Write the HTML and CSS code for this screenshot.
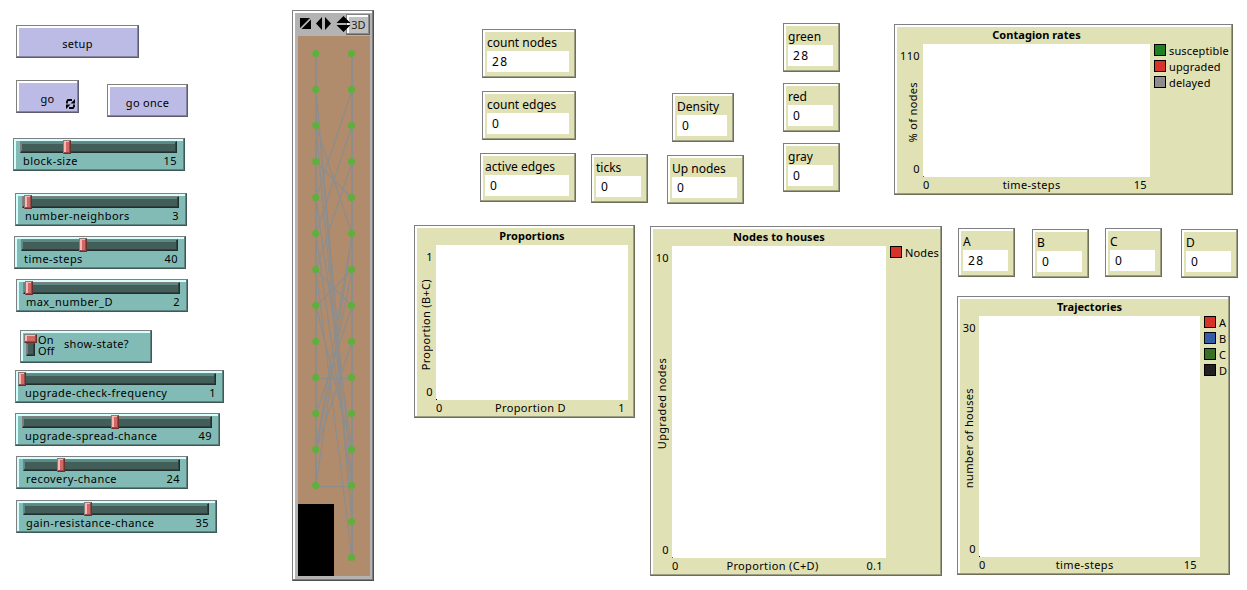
FILE: index.html
```
<!DOCTYPE html>
<html lang="en">
<head>
<meta charset="utf-8">
<title>Contagion model</title>
<link rel="stylesheet" href="styles.css">
</head>
<body>
<main class="canvas">
  <button class="widget button at-setup">setup</button>
  <button class="widget button at-go">go
    <svg class="forever" width="9" height="10" viewBox="0 0 9 10"><path d="M1 4.500V2.500L2 1H6M8 5.500V7.500L7 9H3" fill="none" stroke="#000" stroke-width="1.800"/><path d="M9 0V4.500H4.500zM0 10V5.500H4.500z"/></svg>
  </button>
  <button class="widget button at-once">go once</button>

  <div class="widget slider at-block"><div class="track"></div><i class="thumb"></i><div class="caption"><span>block-size</span><span>15</span></div></div>
  <div class="widget slider at-neighbors"><div class="track"></div><i class="thumb"></i><div class="caption"><span>number-neighbors</span><span>3</span></div></div>
  <div class="widget slider at-steps"><div class="track"></div><i class="thumb"></i><div class="caption"><span>time-steps</span><span>40</span></div></div>
  <div class="widget slider at-max"><div class="track"></div><i class="thumb"></i><div class="caption"><span>max_number_D</span><span>2</span></div></div>
  <div class="widget slider switch at-state">
    <div class="lever"><i class="knob"></i><i class="slot"></i></div>
    <div class="states"><span>On</span><span>Off</span></div>
    <span class="switch-name">show-state?</span>
  </div>
  <div class="widget slider at-check"><div class="track"></div><i class="thumb"></i><div class="caption"><span>upgrade-check-frequency</span><span>1</span></div></div>
  <div class="widget slider at-spread"><div class="track"></div><i class="thumb"></i><div class="caption"><span>upgrade-spread-chance</span><span>49</span></div></div>
  <div class="widget slider at-recovery"><div class="track"></div><i class="thumb"></i><div class="caption"><span>recovery-chance</span><span>24</span></div></div>
  <div class="widget slider at-gain"><div class="track"></div><i class="thumb"></i><div class="caption"><span>gain-resistance-chance</span><span>35</span></div></div>

  <section class="widget view">
    <div class="toolbar">
      <svg width="52" height="16" viewBox="0 0 52 16"><path d="M1 2H11L1 12zM12 3.500V13H2.500z"/><path d="M17 7.500L23 1V14zM32 7.500L26 1V14z"/><path d="M37.500 7L44.500 0L51.500 7zM37.500 9H51.500L44.500 16z"/></svg>
      <button class="widget three-d">3D</button>
    </div>
    <svg class="world" width="72" height="540" viewBox="0 0 72 540">
      <rect width="72" height="540" fill="#b08c6c"/>
      <rect y="468" width="36" height="72"/>
      <g stroke="#8d8d8d" fill="none">
        <path stroke-width="2" d="M18 18V450M54 18V522"/>
        <path stroke-width="1.200" d="M18 54L54 486M18 54L54 450M18 90L54 198M18 90L54 486M18 126L54 162M18 162L54 414M18 198L54 450M18 234L54 522M18 234L54 270M18 270L54 414M18 342.500H54M18 450.500H54M54 54L18 162M54 90L18 198M54 126L18 234M54 198L18 414M54 198L18 450M54 234L18 270M54 234L18 414M54 270L18 378M54 306L18 414"/>
      </g>
      <path stroke="#5cb03c" stroke-width="7" stroke-linecap="round" stroke-dasharray="0 36" d="M17.700 17.500V450"/>
      <path stroke="#5cb03c" stroke-width="7" stroke-linecap="round" stroke-dasharray="0 36" d="M53.500 17.500V522"/>
    </svg>
  </section>

  <div class="widget monitor at-nodes"><span>count nodes</span><output>28</output></div>
  <div class="widget monitor at-edges"><span>count edges</span><output>0</output></div>
  <div class="widget monitor at-active"><span>active edges</span><output>0</output></div>
  <div class="widget monitor at-ticks"><span>ticks</span><output>0</output></div>
  <div class="widget monitor at-density"><span>Density</span><output>0</output></div>
  <div class="widget monitor at-up"><span>Up nodes</span><output>0</output></div>
  <div class="widget monitor at-green"><span>green</span><output>28</output></div>
  <div class="widget monitor at-red"><span>red</span><output>0</output></div>
  <div class="widget monitor at-gray"><span>gray</span><output>0</output></div>
  <div class="widget monitor at-a"><span>A</span><output>28</output></div>
  <div class="widget monitor at-b"><span>B</span><output>0</output></div>
  <div class="widget monitor at-c"><span>C</span><output>0</output></div>
  <div class="widget monitor at-d"><span>D</span><output>0</output></div>

  <section class="widget plot at-rates">
    <h2>Contagion rates</h2>
    <div class="y-axis"><span>110</span><span class="y-name">% of nodes</span><span>0</span></div>
    <div class="area"><i class="pen green-pen"></i></div>
    <ul class="legend"><li><i class="susceptible"></i>susceptible</li><li><i class="red"></i>upgraded</li><li><i class="delayed"></i>delayed</li></ul>
    <div class="x-axis"><span>0</span><span class="x-name">time-steps</span><span>15</span></div>
  </section>
  <section class="widget plot at-proportions">
    <h2>Proportions</h2>
    <div class="y-axis"><span>1</span><span class="y-name">Proportion (B+C)</span><span>0</span></div>
    <div class="area"><i class="pen"></i></div>
    <div class="x-axis"><span>0</span><span class="x-name">Proportion D</span><span>1</span></div>
  </section>
  <section class="widget plot at-houses">
    <h2>Nodes to houses</h2>
    <div class="y-axis"><span>10</span><span class="y-name">Upgraded nodes</span><span>0</span></div>
    <div class="area"><i class="pen red-pen"></i></div>
    <ul class="legend"><li><i class="red"></i>Nodes</li></ul>
    <div class="x-axis"><span>0</span><span class="x-name">Proportion (C+D)</span><span>0.1</span></div>
  </section>
  <section class="widget plot at-trajectories">
    <h2>Trajectories</h2>
    <div class="y-axis"><span>30</span><span class="y-name">number of houses</span><span>0</span></div>
    <div class="area"><i class="pen"></i></div>
    <ul class="legend"><li><i class="red"></i>A</li><li><i class="blue"></i>B</li><li><i class="forest"></i>C</li><li><i class="black"></i>D</li></ul>
    <div class="x-axis"><span>0</span><span class="x-name">time-steps</span><span>15</span></div>
  </section>
</main>
</body>
</html>
```
FILE: styles.css
```
* { box-sizing: border-box; }
body { margin: 0; background: #fff; }
.canvas {
  position: relative;
  width: 1247px;
  height: 590px;
  overflow: hidden;
  font: 11px/14px "Noto Sans", "Open Sans", sans-serif;
  letter-spacing: 0.45px;
  color: #000;
  white-space: nowrap;
}

/* Bevelled frame shared by every widget */
.widget {
  position: absolute;
  margin: 0;
  padding: 0;
  border: 1px solid;
  border-color: #808080 var(--dark) var(--dark) #808080;
  border-radius: 0;
  background: var(--face);
  box-shadow: inset -1px -1px var(--mid), inset 2px 2px var(--light);
}

/* Buttons */
.button {
  --face: #bcbbe5; --light: #fff; --mid: #8483a0; --dark: #5c5b70;
  height: 33px;
  padding-top: 4px;
  font: inherit;
  color: #000;
  letter-spacing: 0.3px;
}
.at-setup { left: 16px; top: 25px; width: 123px; }
.at-go { left: 16px; top: 80px; width: 63px; }
.at-once { left: 107px; top: 84px; width: 81px; }
.forever { position: absolute; right: 3px; bottom: 3px; }

/* Sliders and the switch */
.slider {
  --face: #82bbb6; --light: #d5ffff; --mid: #5b8480; --dark: #3d5855;
  height: 33px;
  padding: 2px 7px 0 6px;
}
.track {
  height: 12px;
  border: 1px solid;
  border-color: #808080 #1f2f2d #1f2f2d #808080;
  background: #435d59;
  box-shadow: inset -1px -1px #2f423f, inset 1px 2px #5b8984;
}
.thumb, .knob {
  border: 1px solid;
  border-color: #808080 #693030 #693030 #808080;
  background: #d06866;
  box-shadow: inset -1px -1px #944a48, inset 2px 1px #ffb6b3;
}
.thumb {
  position: absolute;
  left: var(--value);
  top: 1px;
  width: 8px;
  height: 14px;
}
.caption {
  display: flex;
  justify-content: space-between;
  padding: 1px 0 0 3px;
}
.at-block { left: 13px; top: 138px; width: 172px; --value: 49px; }
.at-neighbors { left: 15px; top: 193px; width: 172px; --value: 8px; }
.at-steps { left: 14px; top: 236px; width: 172px; --value: 64px; }
.at-max { left: 16px; top: 279px; width: 172px; --value: 8px; }
.at-check { left: 15px; top: 370px; width: 209px; --value: 2px; }
.at-spread { left: 15px; top: 413px; width: 205px; --value: 95px; }
.at-recovery { left: 16px; top: 456px; width: 172px; --value: 40px; }
.at-gain { left: 16px; top: 500px; width: 201px; --value: 67px; }
.switch {
  left: 20px; top: 330px; width: 132px;
  display: flex;
  padding: 3px 0 0 3px;
}
.lever { display: flex; flex-direction: column; align-items: center; width: 13px; }
.knob { width: 13px; height: 9px; }
.slot { width: 9px; height: 13px; background: #435d59; border: 1px solid; border-color: #435d59 #1f2f2d #1f2f2d #808080; box-shadow: inset -1px -1px #2f423f, inset 1px 0 #5b8984; }
.states { display: flex; flex-direction: column; width: 27px; padding-left: 1px; font-size: 11px; line-height: 11px; letter-spacing: 0.1px; }
.switch-name { padding-top: 3px; letter-spacing: 0.35px; }

/* World view */
.view {
  --face: #b3b3b3; --light: #fff; --mid: #7d7d7d; --dark: #4f4f4f;
  left: 292px; top: 10px; width: 82px; height: 571px;
  padding: 3px 3px 4px 5px;
}
.toolbar { display: flex; height: 22px; padding-top: 2px; }
.toolbar svg { position: relative; z-index: 1; flex: none; margin-left: 1px; }
.three-d {
  --face: #c0c0c0; --light: #fff; --mid: #8a8a8a; --dark: #606060;
  position: relative;
  flex: none;
  margin: -2px 0 0 -5px;
  padding-left: 1px;
  width: 24px;
  height: 21px;
  font: inherit;
  letter-spacing: 0;
  color: #222;
}
.world { display: block; }

/* Monitors */
.monitor {
  --face: #e0e1b5; --light: #fff; --mid: #9d9e7f; --dark: #6d6d58;
  display: flex;
  flex-direction: column;
  width: 57px;
  height: 49px;
  padding: 5px 6px 5px 4px;
  font-size: 12px;
  line-height: 16px;
  letter-spacing: 0;
}
.monitor output { height: 21px; padding: 3px 5px 0; background: #fff; letter-spacing: 1.4px; }
.at-nodes { left: 482px; top: 29px; width: 94px; }
.at-edges { left: 482px; top: 91px; width: 94px; }
.at-active { left: 480px; top: 153px; width: 96px; }
.at-ticks { left: 591px; top: 154px; }
.at-density { left: 672px; top: 93px; width: 62px; }
.at-up { left: 667px; top: 155px; width: 77px; }
.at-green { left: 783px; top: 23px; }
.at-red { left: 783px; top: 83px; }
.at-gray { left: 783px; top: 143px; }
.at-a { left: 958px; top: 228px; }
.at-b { left: 1032px; top: 229px; }
.at-c { left: 1105px; top: 228px; }
.at-d { left: 1181px; top: 229px; }

/* Plots */
.plot {
  --face: #e0e1b5; --light: #fff; --mid: #9d9e7f; --dark: #6d6d58;
  display: grid;
  grid-template-columns: 21px var(--span) 1fr;
  grid-template-rows: 19px 1fr 17px;
  letter-spacing: 0.35px;
}
.plot h2 {
  grid-area: 1 / 2;
  margin: 0;
  padding-top: 3px;
  font-size: 11px;
  line-height: 14px;
  font-weight: 700;
  text-align: center;
  letter-spacing: 0.05px;
}
.y-axis {
  grid-area: 2 / 1;
  display: flex;
  flex-direction: column;
  align-items: flex-end;
  justify-content: space-between;
  padding: 5px 3px 1px 0;
}
.y-name { writing-mode: vertical-rl; transform: rotate(180deg); }
.area { grid-area: 2 / 2; display: flex; align-items: flex-end; background: #fff; }
.pen { width: 1px; height: 1px; background: #000; }
.red-pen { background: #d9322b; }
.green-pen { background: #1d8023; }
.x-axis {
  grid-area: 3 / 2;
  display: flex;
  justify-content: space-between;
  padding: 1px 3px 0 0;
}
.legend { grid-area: 2 / 3; margin: 0; padding: 0 0 0 4px; list-style: none; letter-spacing: 0.15px; }
.legend li { display: flex; gap: 3px; height: 16px; }
.legend i { flex: none; width: 12px; height: 12px; border: 1px solid #000; }
.red { background: #d9322b; }
.susceptible { background: #1d8023; }
.delayed { background: #8d8d8d; }
.blue { background: #345da9; }
.forest { background: #376f25; }
.black { background: #202020; }
.at-rates { left: 894px; top: 24px; width: 339px; height: 171px; --span: 227px; grid-template-columns: 28px var(--span) 1fr; }
.at-proportions { left: 414px; top: 225px; width: 221px; height: 193px; --span: 192px; }
.at-houses { left: 650px; top: 226px; width: 292px; height: 350px; --span: 214px; }
.at-trajectories { left: 957px; top: 296px; width: 273px; height: 279px; --span: 221px; }
```
